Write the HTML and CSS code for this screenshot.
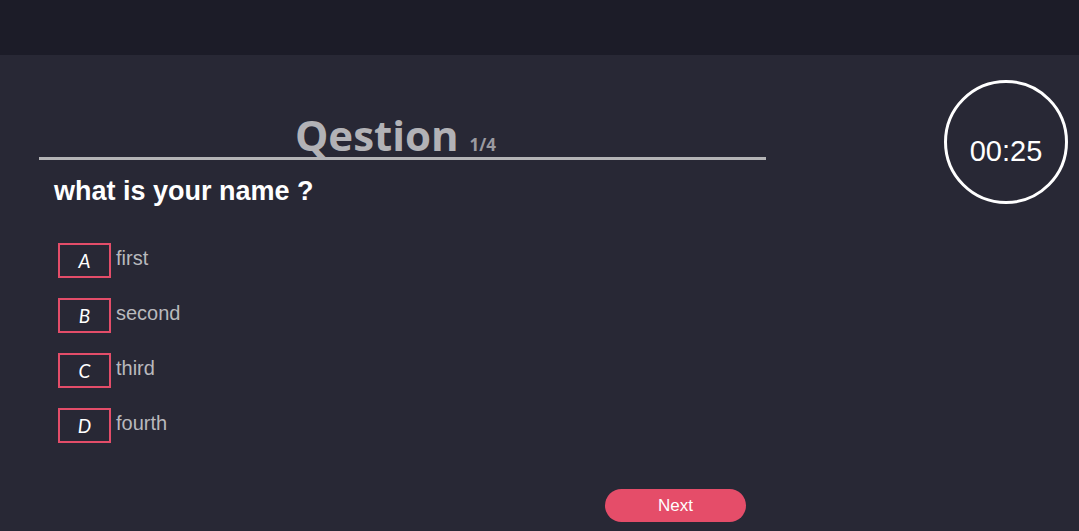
FILE: index.html
```html
<!DOCTYPE html>
<html>
<head>
<meta charset="utf-8">
<link rel="stylesheet" href="styles.css">
</head>
<body>
<header class="topbar"></header>
<main class="main">
  <section class="quiz">
    <h1 class="title">Qestion <span class="count">1/4</span></h1>
    <h2 class="question">what is your name ?</h2>
    <ul class="options">
      <li class="option"><span class="letter">A</span><span class="label">first</span></li>
      <li class="option"><span class="letter">B</span><span class="label">second</span></li>
      <li class="option"><span class="letter">C</span><span class="label">third</span></li>
      <li class="option"><span class="letter">D</span><span class="label">fourth</span></li>
    </ul>
    <button class="next">Next</button>
  </section>
  <aside class="timer">00:25</aside>
</main>
</body>
</html>
```
FILE: styles.css
```css
html, body {
  margin: 0;
  padding: 0;
  height: 100%;
}
body {
  background: #282835;
  font-family: "Liberation Sans", Arial, sans-serif;
  overflow: hidden;
}
.topbar {
  height: 55px;
  background: #1c1c28;
}
.main {
  display: flex;
  align-items: flex-start;
}
.quiz {
  width: 727px;
  margin-left: 39px;
  display: flex;
  flex-direction: column;
}
.title {
  margin: 58px 0 0;
  padding-right: 14px;
  font-family: "Open Sans", sans-serif;
  font-weight: 700;
  font-size: 42px;
  line-height: 44px;
  color: #b2b2b6;
  text-align: center;
  border-bottom: 3px solid #b4b4b6;
}
.count {
  font-size: 17px;
  line-height: 0;
  color: #9a9aa0;
}
.question {
  margin: 16px 0 0 15px;
  font-size: 27px;
  line-height: 31px;
  font-weight: 700;
  color: #ffffff;
}
.options {
  list-style: none;
  margin: 36px 0 0 19px;
  padding: 0;
  display: flex;
  flex-direction: column;
  gap: 20px;
}
.option {
  display: flex;
  align-items: center;
  gap: 5px;
}
.letter {
  width: 49px;
  height: 31px;
  border: 2px solid #e34d69;
  display: flex;
  align-items: center;
  justify-content: center;
  font-family: "Lato", sans-serif;
  font-style: italic;
  font-size: 19px;
  color: #ffffff;
}
.label {
  font-size: 20px;
  color: #b9b9bd;
  margin-top: -4px;
}
.next {
  align-self: flex-end;
  margin: 46px 20px 0 0;
  width: 141px;
  height: 33px;
  border: none;
  border-radius: 17px;
  background: #e54d69;
  color: #ffffff;
  font-family: "Liberation Sans", Arial, sans-serif;
  font-size: 17px;
  padding: 0;
}
.timer {
  margin: 25px 11px 0 auto;
  width: 118px;
  height: 99px;
  padding-top: 19px;
  border: 3px solid #ffffff;
  border-radius: 50%;
  display: flex;
  align-items: center;
  justify-content: center;
  color: #ffffff;
  font-size: 29px;
}
```
